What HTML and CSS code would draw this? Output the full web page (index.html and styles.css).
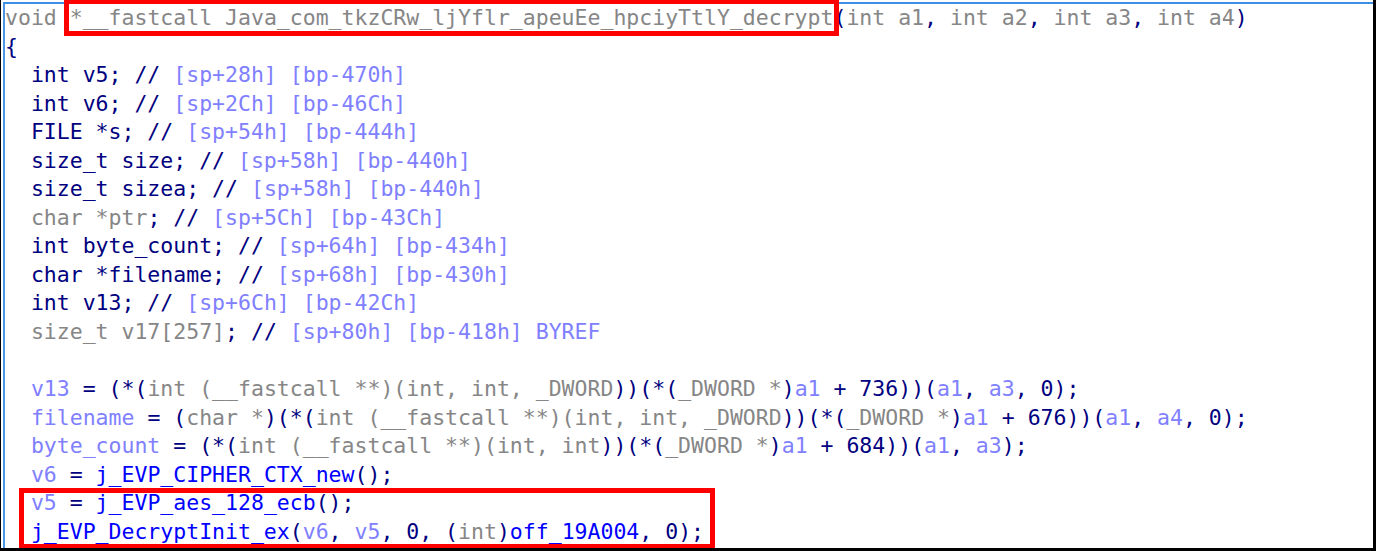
FILE: index.html
```html
<!DOCTYPE html>
<html>
<head>
<meta charset="utf-8">
<link rel="stylesheet" href="styles.css">
</head>
<body>
<div class="frame">
  <div class="panel">
    <div class="code">
      <div class="line"><span class="g">void </span><span class="g hl1">*__fastcall Java_com_tkzCRw_ljYflr_apeuEe_hpciyTtlY_decrypt</span>(<span class="g">int a1</span>, <span class="g">int a2</span>, <span class="g">int a3</span>, <span class="g">int a4</span>)</div>
      <div class="line">{</div>
      <div class="line in">int v5; // <span class="l">[sp+28h] [bp-470h]</span></div>
      <div class="line in">int v6; // <span class="l">[sp+2Ch] [bp-46Ch]</span></div>
      <div class="line in">FILE *s; // <span class="l">[sp+54h] [bp-444h]</span></div>
      <div class="line in">size_t size; // <span class="l">[sp+58h] [bp-440h]</span></div>
      <div class="line in">size_t sizea; // <span class="l">[sp+58h] [bp-440h]</span></div>
      <div class="line in"><span class="g">char *ptr</span>; // <span class="l">[sp+5Ch] [bp-43Ch]</span></div>
      <div class="line in">int byte_count; // <span class="l">[sp+64h] [bp-434h]</span></div>
      <div class="line in">char *filename; // <span class="l">[sp+68h] [bp-430h]</span></div>
      <div class="line in">int v13; // <span class="l">[sp+6Ch] [bp-42Ch]</span></div>
      <div class="line in"><span class="g">size_t v17[257]</span>; // <span class="l">[sp+80h] [bp-418h] BYREF</span></div>
      <div class="line blank"></div>
      <div class="line in"><span class="l">v13</span> = (*(<span class="g">int (__fastcall **)(int, int, _DWORD</span>))(*(<span class="g">_DWORD *</span>)<span class="l">a1</span> + 736))(<span class="l">a1</span>, <span class="l">a3</span>, 0);</div>
      <div class="line in"><span class="l">filename</span> = (<span class="g">char *</span>)(*(<span class="g">int (__fastcall **)(int, int, _DWORD</span>))(*(<span class="g">_DWORD *</span>)<span class="l">a1</span> + 676))(<span class="l">a1</span>, <span class="l">a4</span>, 0);</div>
      <div class="line in"><span class="l">byte_count</span> = (*(<span class="g">int (__fastcall **)(int, int</span>))(*(<span class="g">_DWORD *</span>)<span class="l">a1</span> + 684))(<span class="l">a1</span>, <span class="l">a3</span>);</div>
      <div class="line in"><span class="l">v6</span> = <span class="b">j_EVP_CIPHER_CTX_new</span>();</div>
      <div class="hl2">
        <div class="line in"><span class="l">v5</span> = <span class="b">j_EVP_aes_128_ecb</span>();</div>
        <div class="line in"><span class="b">j_EVP_DecryptInit_ex</span>(<span class="l">v6</span>, <span class="l">v5</span>, 0, (<span class="g">int</span>)<span class="b">off_19A004</span>, 0);</div>
      </div>
    </div>
  </div>
</div>
</body>
</html>
```

FILE: styles.css
```css
html, body {
  margin: 0;
  padding: 0;
  background: #ffffff;
}

.frame {
  box-sizing: border-box;
  width: 1376px;
  height: 551px;
  border-left: 1px solid #000000;
  border-right: 3px solid #000000;
  border-bottom: 3px solid #000000;
  padding: 2px 0 0 2px;
  background: #ffffff;
  overflow: hidden;
}

.panel {
  box-sizing: border-box;
  height: 100%;
  border-top: 2px solid #3d8fe6;
  border-left: 2px solid #4a96e2;
  background: #ffffff;
}

.code {
  font-family: "DejaVu Sans Mono", monospace;
  font-size: 21.5px;
  line-height: 28.56px;
  color: #000080;
}

.line {
  height: 28.56px;
  white-space: pre;
}

.line.in {
  padding-left: 25.89px;
}

.g { color: #868686; }
.l { color: #8080ff; }
.b { color: #0000ff; }

.hl1 {
  outline: 5px solid #ff0000;
  outline-offset: 1px;
}

.hl2 {
  position: relative;
  width: fit-content;
}

.hl2::after {
  content: "";
  position: absolute;
  left: 14px;
  right: -11px;
  top: -1px;
  bottom: -3px;
  border: 5px solid #ff0000;
  pointer-events: none;
}
```
